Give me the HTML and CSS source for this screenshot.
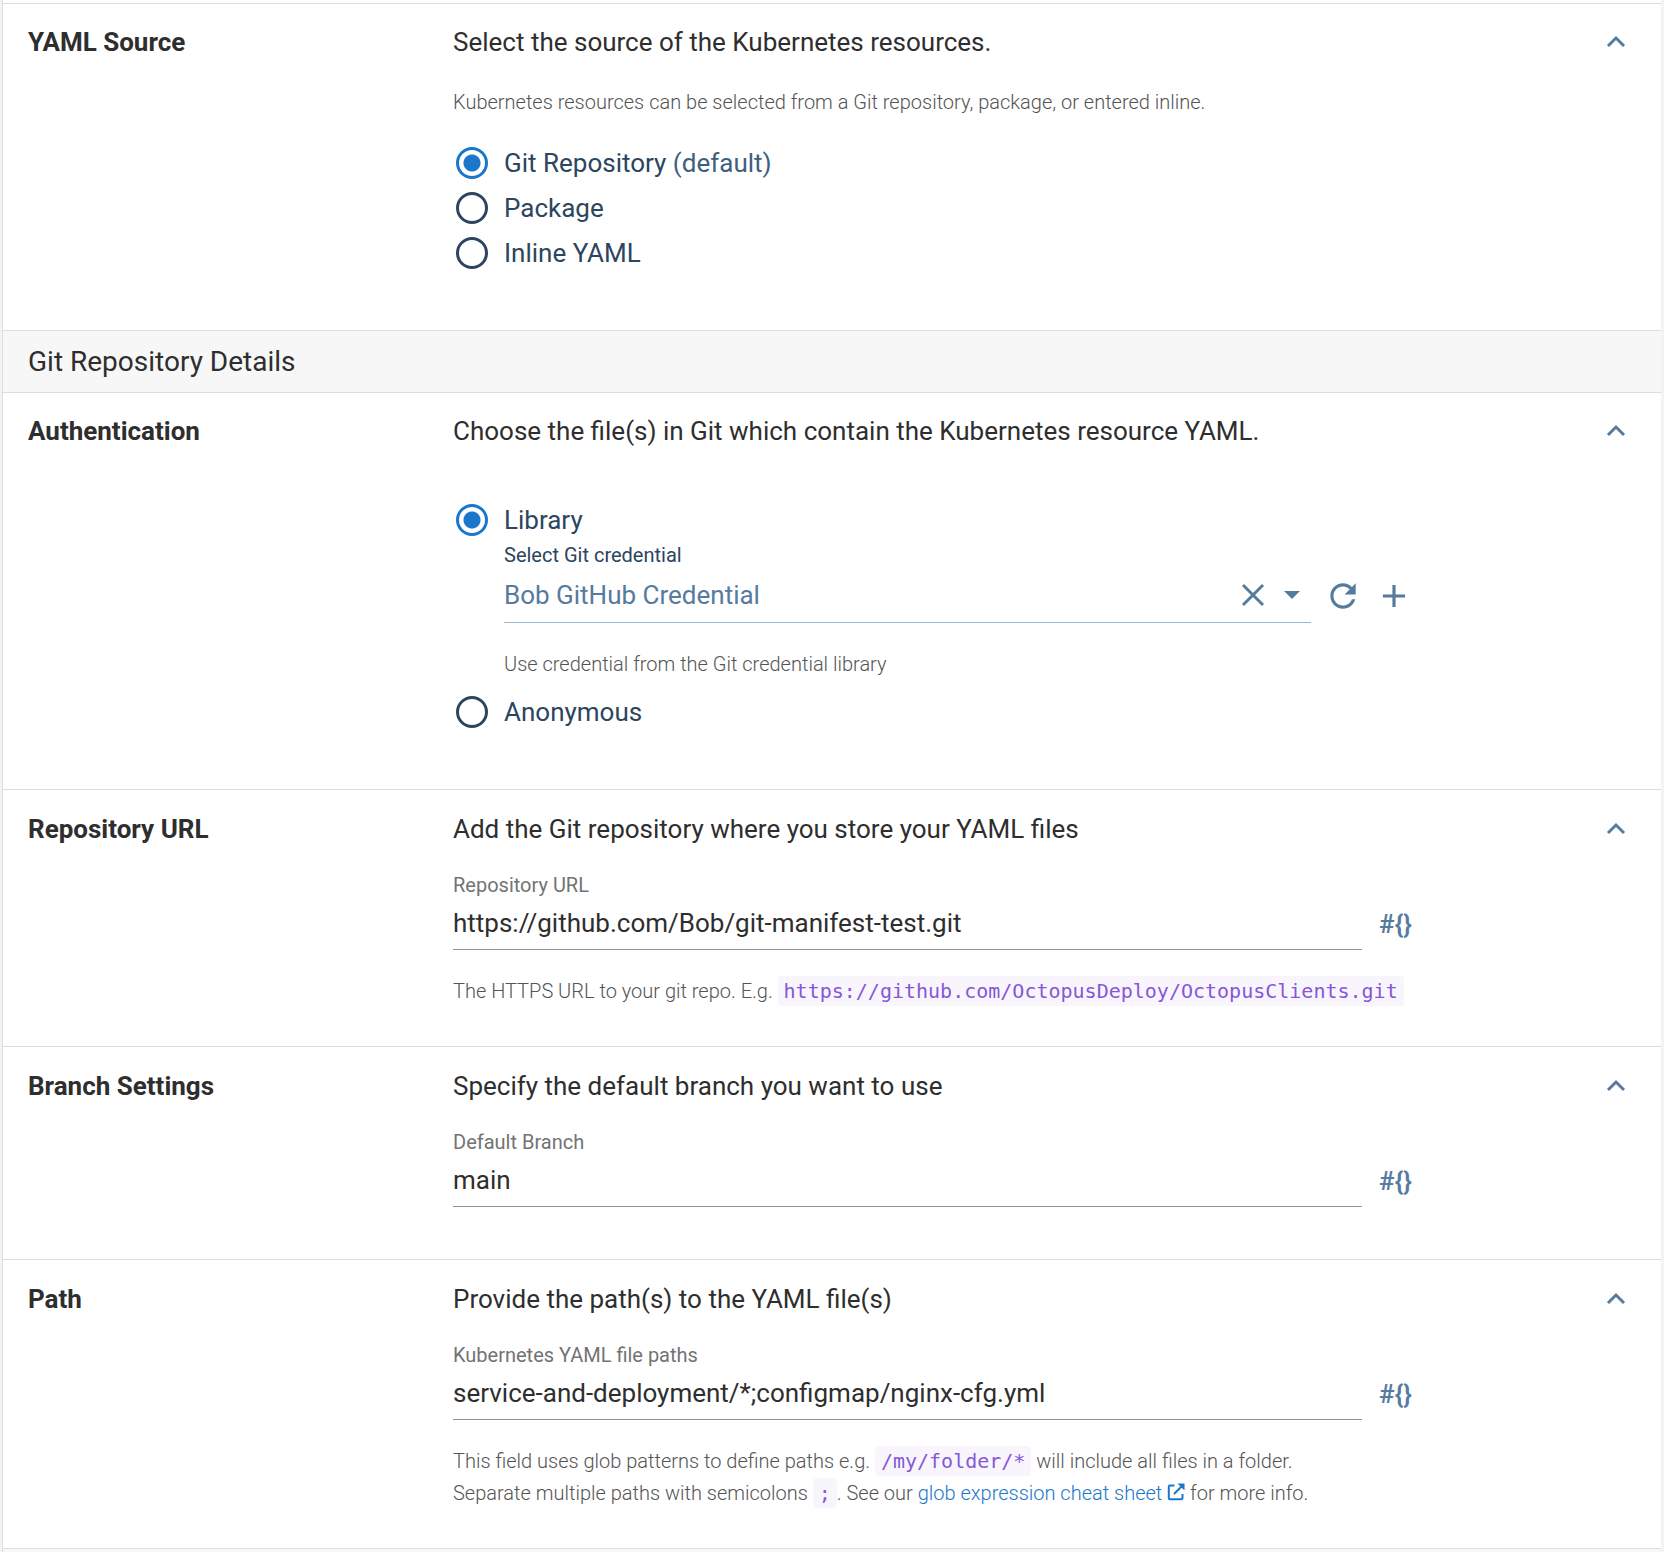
FILE: index.html
```
<!DOCTYPE html>
<html lang="en">
<head>
<meta charset="utf-8">
<title>Kubernetes YAML step</title>
<link rel="stylesheet" href="styles.css">
</head>
<body>
<form class="panel">
  <section class="section">
    <h2 class="section-name">YAML Source</h2>
    <div class="section-body">
      <p class="summary">Select the source of the Kubernetes resources.</p>
      <p class="note intro">Kubernetes resources can be selected from a Git repository, package, or entered inline.</p>
      <div class="radio-list">
        <label class="radio"><input type="radio" name="source" checked><span>Git Repository <span class="default">(default)</span></span></label>
        <label class="radio"><input type="radio" name="source"><span>Package</span></label>
        <label class="radio"><input type="radio" name="source"><span>Inline YAML</span></label>
      </div>
    </div>
    <button class="icon-button collapse" type="button" aria-label="Collapse YAML Source"><svg width="32" height="32" viewBox="0 0 32 32"><path d="M8 20l8-8 8 8" class="line"/></svg></button>
  </section>

  <h1 class="group-title">Git Repository Details</h1>

  <section class="section">
    <h2 class="section-name">Authentication</h2>
    <div class="section-body">
      <p class="summary">Choose the file(s) in Git which contain the Kubernetes resource YAML.</p>
      <div class="auth">
        <label class="radio"><input type="radio" name="auth" checked><span>Library</span></label>
        <div class="credential">
          <label class="credential-label" for="credential">Select Git credential</label>
          <div class="credential-row">
            <div class="select-box">
              <select id="credential"><option>Bob GitHub Credential</option></select>
              <button class="icon-button clear" type="button" aria-label="Clear"><svg width="24" height="24" viewBox="0 0 24 24"><path d="M2 2l20 20M22 2L2 22" class="line"/></svg></button>
              <svg class="caret" width="16" height="8" viewBox="0 0 16 8"><path d="M0 0h16L8 8z"/></svg>
            </div>
            <button class="icon-button refresh" type="button" aria-label="Refresh"><svg width="38" height="38" viewBox="0 0 24 24"><path d="M17.65 6.35C16.2 4.9 14.21 4 12 4c-4.42 0-7.99 3.58-7.99 8s3.57 8 7.99 8c3.73 0 6.84-2.55 7.73-6h-2.08c-.82 2.33-3.04 4-5.65 4-3.31 0-6-2.69-6-6s2.69-6 6-6c1.66 0 3.14.69 4.22 1.78L13 11h7V4l-2.35 2.35z"/></svg></button>
            <button class="icon-button" type="button" aria-label="Add"><svg width="38" height="38" viewBox="0 0 24 24"><path d="M19 13h-6v6h-2v-6H5v-2h6V5h2v6h6v2z"/></svg></button>
          </div>
          <p class="note">Use credential from the Git credential library</p>
        </div>
        <label class="radio"><input type="radio" name="auth"><span>Anonymous</span></label>
      </div>
    </div>
    <button class="icon-button collapse" type="button" aria-label="Collapse Authentication"><svg width="32" height="32" viewBox="0 0 32 32"><path d="M8 20l8-8 8 8" class="line"/></svg></button>
  </section>

  <section class="section with-field">
    <h2 class="section-name">Repository URL</h2>
    <div class="section-body">
      <p class="summary">Add the Git repository where you store your YAML files</p>
      <label class="field-label" for="url">Repository URL</label>
      <div class="field-row">
        <input class="text-input" id="url" type="text" value="https://github.com/Bob/git-manifest-test.git">
        <button class="variable" type="button" aria-label="Insert variable">#{}</button>
      </div>
      <p class="note">The HTTPS URL to your git repo. E.g. <code>https://github.com/OctopusDeploy/OctopusClients.git</code></p>
    </div>
    <button class="icon-button collapse" type="button" aria-label="Collapse Repository URL"><svg width="32" height="32" viewBox="0 0 32 32"><path d="M8 20l8-8 8 8" class="line"/></svg></button>
  </section>

  <section class="section with-field compact">
    <h2 class="section-name">Branch Settings</h2>
    <div class="section-body">
      <p class="summary">Specify the default branch you want to use</p>
      <label class="field-label" for="branch">Default Branch</label>
      <div class="field-row">
        <input class="text-input" id="branch" type="text" value="main">
        <button class="variable" type="button" aria-label="Insert variable">#{}</button>
      </div>
    </div>
    <button class="icon-button collapse" type="button" aria-label="Collapse Branch Settings"><svg width="32" height="32" viewBox="0 0 32 32"><path d="M8 20l8-8 8 8" class="line"/></svg></button>
  </section>

  <section class="section with-field">
    <h2 class="section-name">Path</h2>
    <div class="section-body">
      <p class="summary">Provide the path(s) to the YAML file(s)</p>
      <label class="field-label" for="paths">Kubernetes YAML file paths</label>
      <div class="field-row">
        <input class="text-input" id="paths" type="text" value="service-and-deployment/*;configmap/nginx-cfg.yml">
        <button class="variable" type="button" aria-label="Insert variable">#{}</button>
      </div>
      <p class="note">This field uses glob patterns to define paths e.g. <code>/my/folder/*</code> will include all files in a folder.<br>Separate multiple paths with semicolons <code>;</code>. See our <a href="#glob">glob expression cheat sheet <svg class="external" width="18" height="18" viewBox="0 0 18 18"><path d="M7.500 2.500H3q-1.200 0-1.200 1.200V15q0 1.200 1.200 1.200h11.300q1.200 0 1.200-1.200V11M7 11l8-8" class="line"/><path d="M10.500.500h7v7z"/></svg></a> for more info.</p>
    </div>
    <button class="icon-button collapse" type="button" aria-label="Collapse Path"><svg width="32" height="32" viewBox="0 0 32 32"><path d="M8 20l8-8 8 8" class="line"/></svg></button>
  </section>
  <div class="next-group"></div>
</form>
</body>
</html>
```
FILE: styles.css
```
* { box-sizing: border-box; }

body {
  margin: 0;
  background: #f3f3f3;
  color: #2e2e2e;
  font-family: Roboto, "Liberation Sans", sans-serif;
  font-size: 26px;
  line-height: 32px;
}

h1, h2, p { margin: 0; font-size: 26px; font-weight: 400; }

button, input, select { font: inherit; color: inherit; }

.panel {
  margin: 0 3px 0 2px;
  padding-top: 3px;
  border-left: 1px solid #e0e0e0;
  background: #fff;
}

.section {
  display: grid;
  grid-template-columns: 400px minmax(0, 960px) 1fr;
  column-gap: 25px;
  padding: 22px 29px 39px 25px;
  border-top: 1px solid #dedede;
}

.with-field { padding-top: 23px; }
.compact { padding-bottom: 27px; }

.section-name { font-weight: 700; }

.group-title {
  padding: 15px 25px 14px;
  border-top: 1px solid #dedede;
  background: #f7f7f7;
  font-size: 28px;
}

.note {
  color: #545454;
  font-size: 20px;
  font-weight: 300;
}

.intro { margin-top: 28px; }

.radio-list { margin-top: 22px; padding-bottom: 16px; }

.radio {
  display: flex;
  align-items: center;
  gap: 16px;
  height: 45px;
  padding-left: 3px;
  color: #2c4560;
}

.radio input {
  appearance: none;
  width: 32px;
  height: 32px;
  margin: 0;
  border: 3px solid #2c4560;
  border-radius: 50%;
}

.radio input:checked {
  border-color: #1a77ca;
  background: radial-gradient(circle, #1a77ca 8px, #fff 9px);
}

.default { color: #3d607f; }

.auth { margin-top: 50px; padding-bottom: 16px; }

.credential { padding: 0 0 9px 51px; }

.credential-label {
  display: block;
  height: 26px;
  color: #2c4560;
  font-size: 20px;
  line-height: 26px;
}

.credential-row { display: flex; align-items: center; margin-bottom: 25px; }

.select-box {
  display: flex;
  flex: 1;
  align-items: center;
  max-width: 807px;
  height: 55px;
  padding-right: 11px;
  border-bottom: 1px solid #9db6cb;
}

.select-box select {
  appearance: none;
  flex: 1;
  padding: 0;
  border: 0;
  background: none;
  color: #557b9e;
}

.caret { margin-left: 19px; fill: #557b9e; }

.icon-button {
  display: flex;
  padding: 0;
  border: 0;
  background: none;
}

.icon-button svg { fill: #557b9e; }
.icon-button .line { fill: none; stroke: #557b9e; stroke-width: 3; }

.refresh { margin: 0 13px; }

.collapse { justify-self: end; align-self: start; }

.field-label {
  display: block;
  margin-top: 24px;
  color: #737373;
  font-size: 20px;
}

.field-row { display: flex; align-items: center; gap: 16px; margin-bottom: 25px; }

.text-input {
  flex: 1;
  min-width: 0;
  height: 49px;
  padding: 0 0 4px;
  border: 0;
  border-bottom: 1px solid #929292;
  background: none;
}

.variable {
  width: 35px;
  padding: 0 0 4px;
  border: 0;
  background: none;
  color: #557b9e;
  font-size: 26px;
  font-weight: 600;
}

code {
  padding: 3px 6px;
  border-radius: 4px;
  background: #f8f5fd;
  color: #8757d7;
  font-family: "DejaVu Sans Mono", monospace;
  font-size: 20px;
  font-weight: 400;
}

a { color: #1a77ca; text-decoration: none; }

.external { vertical-align: -1px; fill: #1a77ca; }
.external .line { fill: none; stroke: #1a77ca; stroke-width: 2; }

.next-group { height: 5px; border-top: 1px solid #dedede; background: #f7f7f7; }
```
